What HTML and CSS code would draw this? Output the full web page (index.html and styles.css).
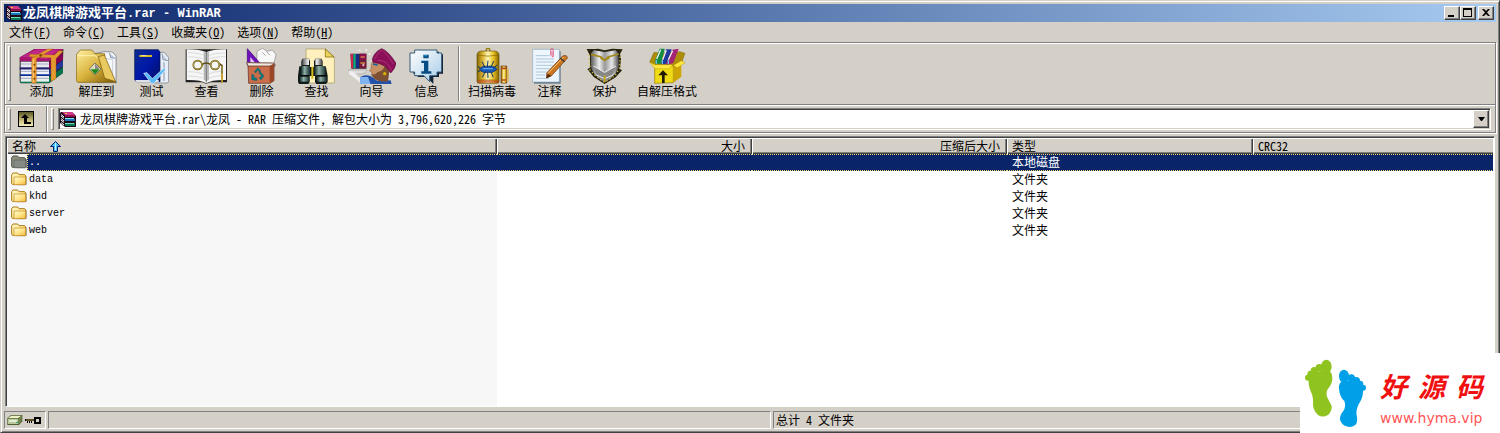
FILE: index.html
```html
<!DOCTYPE html>
<html lang="zh-CN">
<head>
<meta charset="utf-8">
<title>龙凤棋牌游戏平台.rar - WinRAR</title>
<link rel="stylesheet" href="styles.css">
</head>
<body>
<svg class="defs" aria-hidden="true">
  <defs>
    <linearGradient id="fold" x1="0" y1="0" x2="1" y2="1"><stop offset="0" stop-color="#fffbd0"/><stop offset=".5" stop-color="#ffe58a"/><stop offset="1" stop-color="#f5b93c"/></linearGradient>
    <linearGradient id="gold" x1="0" y1="0" x2="1" y2="1"><stop offset="0" stop-color="#fff0a0"/><stop offset=".5" stop-color="#d8b23c"/><stop offset="1" stop-color="#7c5804"/></linearGradient>
    <linearGradient id="tank"><stop offset="0" stop-color="#8a6a08"/><stop offset=".25" stop-color="#d8b030"/><stop offset=".5" stop-color="#fff8b8"/><stop offset=".75" stop-color="#e8c020"/><stop offset="1" stop-color="#806000"/></linearGradient>
    <linearGradient id="steel"><stop offset="0" stop-color="#555"/><stop offset=".3" stop-color="#eee"/><stop offset=".5" stop-color="#999"/><stop offset=".75" stop-color="#e8e8e8"/><stop offset="1" stop-color="#444"/></linearGradient>
    <linearGradient id="tube"><stop offset="0" stop-color="#142424"/><stop offset=".4" stop-color="#8fb0a8"/><stop offset="1" stop-color="#182c2c"/></linearGradient>
    <linearGradient id="bluebook" x1="0" y1="0" x2="1" y2="1"><stop offset="0" stop-color="#0a2c90"/><stop offset=".5" stop-color="#0018a8"/><stop offset="1" stop-color="#000f60"/></linearGradient>
    <linearGradient id="info" x1="0" y1="0" x2="1" y2="1"><stop offset="0" stop-color="#fff"/><stop offset="1" stop-color="#a8cce8"/></linearGradient>
    <linearGradient id="upbg" x1="0" y1="0" x2="0" y2="1"><stop offset="0" stop-color="#5c5828"/><stop offset=".6" stop-color="#c8bc78"/><stop offset="1" stop-color="#f4ecc0"/></linearGradient>
    <symbol id="books" viewBox="0 0 16 16">
      <path d="M1 1h11l4 4v11H5L0 12V2z" fill="#200818"/>
      <path d="M2 1h10l3 3H5z" fill="#d03888"/><path d="M5 4h10v2H5z" fill="#90104c"/>
      <path d="M5 8h10v2H5z" fill="#1878b8"/><path d="M5 7h9v1H5z" fill="#90e0f8"/>
      <path d="M5 12h10v3H5z" fill="#087858"/><path d="M5 12h9v1H5z" fill="#70e0b8"/>
      <path d="M1 3.500l3 2.500M1 5l3 2.500M1 7.500l3 2.500M1 9l3 2.500M1 11.500l3 2.500" stroke="#fff" stroke-width="1"/>
      <path d="M5 2h2v1H5z" fill="#e8c040"/>
    </symbol>
    <symbol id="folder" viewBox="0 0 48 42">
      <path d="M5 40h40l3-3V12l-3 2v24z" fill="#888" opacity=".6"/>
      <path d="M2 8l4-5h14l4 5h17l3 4v25H4l-2-3z" fill="url(#fold)" stroke="#a87818" stroke-width="3"/>
      <path d="M9 37V15h35v21l-2 2H10z" fill="url(#fold)" stroke="#c08a20" stroke-width="2"/>
    </symbol>
    <symbol id="folder-up" viewBox="0 0 48 42">
      <path d="M5 40h40l3-3V12l-3 2v24z" fill="#8a8a8a"/>
      <path d="M2 8l4-5h14l4 5h17l3 4v25H4l-2-3z" fill="#8c8f7d" stroke="#545448" stroke-width="3"/>
      <path d="M9 37V15h35v21l-2 2H10z" fill="#858a84" stroke="#5c6060" stroke-width="2"/>
    </symbol>
  </defs>
</svg>
<div class="window">
  <header class="titlebar">
    <svg class="icon16" aria-hidden="true"><use href="#books"/></svg>
    <h1 class="title">龙凤棋牌游戏平台<span class="latin">.rar - WinRAR</span></h1>
    <div class="captions">
      <button class="caption" aria-label="最小化"><svg width="12" height="10" viewBox="0 0 12 10"><path d="M2 7h6v2H2z"/></svg></button>
      <button class="caption" aria-label="最大化"><svg width="12" height="10" viewBox="0 0 12 10"><path fill-rule="evenodd" d="M1 0h9v9H1zM2 2v6h7V2z"/></svg></button>
      <button class="caption close" aria-label="关闭"><svg width="12" height="10" viewBox="0 0 12 10"><path d="M2 1h2l2 2 2-2h2L7 4.500l3 3.500H8L6 6 4 8H2l3-3.500z"/></svg></button>
    </div>
  </header>

  <nav class="menubar">
    <button>文件(<u>F</u>)</button>
    <button>命令(<u>C</u>)</button>
    <button>工具(<u>S</u>)</button>
    <button>收藏夹(<u>O</u>)</button>
    <button>选项(<u>N</u>)</button>
    <button>帮助(<u>H</u>)</button>
  </nav>

  <div class="rebar">
    <div class="band tools">
      <i class="grip"></i>
      <button class="tool"><svg width="45" height="36" viewBox="55 25 135 108">
        <path d="M57 54L101 28h87l-2 73-41 30H60l-3-5z" fill="#222"/>
        <path d="M144 70l43-31v22l-43 28z" fill="#840050"/><path d="M145 91l42-29v18l-42 28z" fill="#24389c"/><path d="M145 112l42-29v17l-42 30z" fill="#08704c"/>
        <path d="M57 53L102 28h87l-42 37H58z" fill="#a81470"/><path d="M63 51l42-21h70l-37 28z" fill="#c02888"/>
        <path d="M60 66h85v18H60z" fill="#e8e8f0"/><path d="M60 88h85v17H60z" fill="#eef2f8"/><path d="M60 109h85v18H60z" fill="#e6eeee"/>
        <path d="M61 73h83M61 95h83M61 116h83" stroke="#a8acc0" stroke-width="3"/>
        <path d="M57 85h88M57 88h88" stroke="#202080" stroke-width="3"/><path d="M57 106h88" stroke="#0838c0" stroke-width="4"/><path d="M58 128h87" stroke="#087850" stroke-width="4"/>
        <path d="M87 44l74 2 14-13 13 1-22 23v60l-15 8V54l-64-3zM93 55l48-27h15l-49 29v73H93z" fill="#e59a30" stroke="#a05808" stroke-width="1"/>
        <path d="M98 58v70" stroke="#ffd080" stroke-width="3"/><g fill="#7c4200"><circle cx="101" cy="75" r="3"/><circle cx="101" cy="96" r="3"/><circle cx="101" cy="117" r="3"/><circle cx="120" cy="47" r="4"/></g>
      </svg><span>添加</span></button>
      <button class="tool"><svg width="41" height="36" viewBox="233 25 123 108">
        <path d="M286 43l31-7 25 1 11 12v80h-55z" fill="#f5f7fa" stroke="#606878" stroke-width="2"/><path d="M333 40l4 14 14 2" fill="#b8c4d8" stroke="#7080a0" stroke-width="2"/><path d="M312 54l31 6v62" fill="none" stroke="#b8c0cc" stroke-width="2"/>
        <path d="M234 45l12-14h34l10 11h29v50l35 36H238l-4-5z" fill="url(#gold)" stroke="#755400" stroke-width="2"/>
        <path d="M237 48h54l6 8" fill="none" stroke="#fff4b0" stroke-width="3"/><path d="M300 51l18-5 34 80-33-10z" fill="#e8ca60" stroke="#735306" stroke-width="2"/>
        <path d="M290 70l18 18-18 18-17-18z" fill="#e0e0c0" stroke="#555" stroke-width="2"/><path d="M277 89h27l-14 15z" fill="#208818"/><path d="M290 72v16h14z" fill="#888"/>
      </svg><span>解压到</span></button>
      <button class="tool"><svg width="35" height="36" viewBox="403 25 105 108">
        <path d="M454 38h40l13 16v73l-5 3h-48z" fill="#e8eef8" stroke="#687080" stroke-width="2"/><path d="M487 42l3 18 15 3" fill="#c0cce0" stroke="#707890" stroke-width="2"/><path d="M493 68v56" stroke="#8894a8" stroke-width="3"/>
        <path d="M405 30h71l5 7v89h-71l-5-6z" fill="url(#bluebook)" stroke="#00104c" stroke-width="2"/><path d="M407 121h70v6h-67z" fill="#dce0ea"/>
        <path d="M419 46h38v6h-38z" fill="#d4bc20"/><path d="M425 48h15" stroke="#fff" stroke-width="2"/>
        <path d="M432 101l10-2 16 18 35-32 6 3-36 43h-8z" fill="#58b8f8" stroke="#e8f6ff" stroke-width="2"/>
      </svg><span>测试</span></button>
      <button class="tool"><svg width="43" height="36" viewBox="34 25 129 108">
        <path d="M36 29h124v99h-49l-13 4-13-4H36z" fill="#202020"/><path d="M39 29q42 0 59 10 17-10 59-10v92q-43-1-59 10-17-11-59-10z" fill="#f6f6f6"/>
        <path d="M90 34q6 1 8 5v88q-3-5-8-7zM98 39q2-4 8-5v86q-6 2-8 7z" fill="#b9b9b9"/><path d="M98 39v90" stroke="#555" stroke-width="2"/>
        <path d="M43 39q27 0 47 7M43 51q22 0 44 6M43 96q24 0 44 6M43 109q24 0 44 6M106 47q17-7 49-7M106 58q17-7 49-7M106 102q17-7 38-7M106 115q17-7 38-7" fill="none" stroke="#ccc" stroke-width="2"/>
        <g fill="none" stroke="#594a10" stroke-width="5"><circle cx="72" cy="76" r="13"/><circle cx="124" cy="76" r="13"/><path d="M85 75q13-10 26 0M137 72l8 6v25"/></g><g fill="none" stroke="#e8cf59" stroke-width="2"><circle cx="72" cy="76" r="13"/><circle cx="124" cy="76" r="13"/><path d="M145 78v27"/></g><path d="M142 104h6v25h-5z" fill="#c7a020"/>
      </svg><span>查看</span></button>
      <button class="tool"><svg width="31" height="36" viewBox="216 25 93 108">
        <path d="M249 35l16-9 15 9 15-4 11 14-8 33h-50z" fill="#f8f8f8" stroke="#888" stroke-width="2"/><path d="M265 38l10 10M277 35l11 12" stroke="#aaa" stroke-width="3"/>
        <path d="M220 27l43 49h-43z" fill="#7010b8" stroke="#380078" stroke-width="2"/><path d="M229 52l15 17h-15z" fill="#dfc8f5"/>
        <path d="M218 69l82 1 4 8-11 7h-68z" fill="#efe8df" stroke="#765047" stroke-width="3"/>
        <path d="M222 79h66l12-6v50l-12 8h-64z" fill="#c96d4b" stroke="#59281a" stroke-width="2"/><path d="M287 80l12-6v48l-12 8z" fill="#994526"/>
        <path d="M241 97l10-13 10 10-6 2-4-5-5 8zM259 96l11 13-9 12-6-7 5-1 2-6-8-7zM248 123l-15-3 1-17 7 5-1 6 8 1z" fill="#087c82" stroke="#064c53" stroke-width="1"/>
      </svg><span>删除</span></button>
      <button class="tool"><svg width="37" height="36" viewBox="358 25 111 108">
        <path d="M382 28h59l26 24v78h-84z" fill="#fff0bd" stroke="#a4975e" stroke-width="2"/><path d="M440 28v24h26z" fill="#ead25b" stroke="#755d00" stroke-width="2"/>
        <path d="M368 65l3-8h20l3 8v17h12v-17l4-8h19l3 8v18h10l5 25v19l-5 6h-29l-4-6v-18h-16v18l-4 6h-28l-3-6v-19l4-28h6z" fill="#101a18"/>
        <path d="M371 58h20v18h-20zM410 58h20v18h-20z" fill="url(#steel)"/><path d="M367 79h27v28h-27z" fill="url(#tube)"/><path d="M407 79h34v28h-34z" fill="url(#tube)"/><path d="M363 111h29v15h-29z" fill="url(#tube)"/><path d="M414 111h30v15h-30z" fill="url(#tube)"/><path d="M365 108h26M416 108h27" stroke="#000" stroke-width="3"/><path d="M401 81v36" stroke="#d5bb17" stroke-width="6"/>
      </svg><span>查找</span></button>
      <button class="tool"><svg width="48" height="36" viewBox="38 25 144 108">
        <path d="M45 42h48v45H48z" fill="#303030"/><path d="M46 43h7v43h-5z" fill="#d02450"/><path d="M54 43h7v43h-7z" fill="#10a880"/><path d="M62 43h9v43h-9z" fill="#1a2a8c"/><path d="M73 42h20v20H73z" fill="#8a104c"/><path d="M73 64h20v22H73z" fill="#771838"/><path d="M76 52h12M75 70h14" stroke="#f0bc40" stroke-width="3"/>
        <path d="M39 91h56l-4 8-14 4H52z" fill="#ddd" stroke="#777" stroke-width="1"/><path d="M42 93q12 2 21 10l5 9 10 4-2 14-18-15-17-12z" fill="#f0f0f0"/>
        <path d="M75 112q14-10 32-2l20 14 39-2 3 12H75z" fill="#2451a8"/><path d="M75 112l-1 21 32 1-8-22z" fill="#80b4f0"/>
        <path d="M115 58q-10 18-8 30l-5 5 7 6q2 15 15 16 16 8 34 0l-2-39z" fill="#c49064" stroke="#684020" stroke-width="1"/><path d="M106 103q15 5 20-5 23-4 24-30l14 11-6 46q-24 5-41-8z" fill="#7b5035"/>
        <path d="M111 60q4-22 28-33 20 7 43 44-3 17-16 29-14-28-52-32z" fill="#8c1058" stroke="#58003a" stroke-width="2"/><path d="M118 58q13-25 24-27 14 13 33 43M126 62q31-2 42 30" fill="none" stroke="#b84080" stroke-width="2"/>
        <path d="M113 73l14 3" stroke="#1060a8" stroke-width="4"/><circle cx="148" cy="102" r="5" fill="#d8b000"/><path d="M93 28v6M90 31h6M73 30v4M71 32h4M102 40v6M99 43h6M65 31v2M107 61v4M84 72v8M80 76h8M109 32v3" stroke="#fff" stroke-width="2"/>
      </svg><span>向导</span></button>
      <button class="tool"><svg width="36" height="36" viewBox="223 25 108 108">
        <path d="M249 36h64v8h12v58h-12v10h-17v21l-20-21h-27v-10h-13V44h13z" fill="#123"/>
        <path d="M240 31h67v9h14v57h-14v11h-22v18l-17-18h-28V97h-14V40h14z" fill="url(#info)" stroke="#355a78" stroke-width="3"/>
        <path d="M266 45h16v11h-16zM260 63h21v32h9v7h-30v-7h8V70h-8z" fill="#074c84"/><path d="M269 46h8v4h-8z" fill="#2990c0"/>
      </svg><span>信息</span></button>
      <i class="separator"></i>
      <button class="tool wide"><svg width="33" height="36" viewBox="424 25 99 108">
        <path d="M454 33q0-7 6-7t6 7" fill="none" stroke="#9a7b08" stroke-width="4"/><path d="M427 47q0-13 16-13h34q16 0 16 13v79q0 5-7 5h-51q-8 0-8-5z" fill="url(#tank)" stroke="#624c00" stroke-width="2"/>
        <path d="M429 46q31 7 62 0M428 121h64" fill="none" stroke="#836800" stroke-width="2"/><path d="M428 122h64v7h-64z" fill="#c43824" opacity=".6"/>
        <path d="M434 89q8-12 23-9 20-4 30 9-11 13-28 9-17 3-25-9z" fill="#1a5cb8" stroke="#08245c" stroke-width="2"/><path d="M442 66l9 18M460 63l-2 19M477 64l-8 19M488 76l-12 9M443 113l9-18M460 115l-1-19M476 113l-7-17M429 80l9 6M429 97l9-5" stroke="#0a3470" stroke-width="3"/><path d="M445 87h29" stroke="#70b8f0" stroke-width="3"/>
        <path d="M499 79h17v51h-17z" fill="url(#tank)" stroke="#5e2708" stroke-width="2"/><path d="M500 86h15M500 121h15" stroke="#b74716" stroke-width="5"/><path d="M516 87h6v39h-6z" fill="#ddb64e"/>
      </svg><span>扫描病毒</span></button>
      <button class="tool"><svg width="36" height="36" viewBox="43 25 108 108">
        <path d="M49 35h80v97H49z" fill="#677887"/><path d="M45 29h80v98H45z" fill="#edf6ff" stroke="#8ca8bb" stroke-width="2"/><path d="M54 48h42M54 58h55M54 67h55M54 77h51M54 87h42M54 97h32M54 106h29M54 116h40" stroke="#8caebe" stroke-width="2"/>
        <path d="M99 47V32q0-5 4-5t4 5v17q0 3-2 3t-2-3V34" fill="none" stroke="#e02050" stroke-width="2"/><path d="M87 100l48-51q11-5 15 5l-49 55-14 6z" fill="#cc7620" stroke="#633008" stroke-width="2"/><path d="M91 101l47-49" stroke="#ffc37a" stroke-width="3"/><path d="M128 56l13 10" stroke="#333" stroke-width="4"/><path d="M85 115l6-13 9 7z" fill="#502800"/>
      </svg><span>注释</span></button>
      <button class="tool"><svg width="37" height="36" viewBox="194 25 111 108">
        <path d="M196 28h26l8-1 20 5 23-5 31 2-8 14 3 14-3 31 6 4-19 21-33 20-33-21-19-24 8-4V48z" fill="#26220e"/><path d="M209 41l8-9 33 5 33-5 8 9 2 40-11 22-32 23-31-22-11-23z" fill="url(#steel)"/>
        <path d="M209 44l31 8 10 10 10-10 32-9M250 62l-13-8M250 62l14-8" fill="none" stroke="#a38918" stroke-width="5"/><path d="M216 79l33 20 35-20-13 36-21 13-22-14z" fill="#888"/><path d="M216 79l34 19 34-19M225 106l25 11 25-11" fill="none" stroke="#eee" stroke-width="3"/>
        <path d="M203 45l3 46 17 18 27 19 31-20 14-23 2-42" fill="none" stroke="#cbbb43" stroke-width="4" stroke-dasharray="4 7"/><path d="M250 107v20" stroke="#c6a610" stroke-width="5"/>
      </svg><span>保护</span></button>
      <button class="tool xwide"><svg width="37" height="36" viewBox="386 25 111 108">
        <path d="M388 67l13-29 18 2 60-4 15 5-9 26-24 11-62-1z" fill="#ad8c08" stroke="#675000" stroke-width="1"/>
        <path d="M405 60l13-33h15l-11 45h-17z" fill="#128b43"/><path d="M422 72l15-43h17l-15 45h-17z" fill="#203a9c"/><path d="M437 72l19-42 19-3-16 43-20 6z" fill="#a32476"/><path d="M409 58l12-28M427 60l11-28M444 60l13-27" stroke="#f0f0f0" stroke-width="4"/><path d="M408 61v12M426 61v12M444 61v12" stroke="#67b8e5" stroke-width="4"/>
        <path d="M403 76l56 3v50l-56 2z" fill="#efdb13" stroke="#987b00" stroke-width="2"/><path d="M459 79l24-13v45l-24 18z" fill="#cda708"/><path d="M388 67l16 8h55l-13 12h-42zM459 77l24-14 12 6-24 15z" fill="#ffe83e" stroke="#9c7c00" stroke-width="1"/>
        <path d="M428 92l15 15h-10v23h-8v-23h-11z" fill="#201c00"/>
      </svg><span>自解压格式</span></button>
    </div>
    <div class="band address">
      <i class="grip"></i>
      <button class="up" aria-label="上级目录"><svg width="16" height="16" viewBox="0 0 16 16"><path d="M0 0h16v16H0z"/><path d="M1 1h14v14H1z" fill="url(#upbg)"/><path d="M7 3l4 4H9v4h4v2H6V7H3z"/></svg></button>
      <i class="separator"></i>
      <i class="grip"></i>
      <div class="combo">
        <svg class="icon16" aria-hidden="true"><use href="#books"/></svg>
        <select aria-label="路径"><option>龙凤棋牌游戏平台.rar\龙凤 - RAR 压缩文件, 解包大小为 3,796,620,226 字节</option></select>
        <span class="drop"><svg width="7" height="4" viewBox="0 0 7 4"><path d="M0 0h7L4 4H3z"/></svg></span>
      </div>
    </div>
  </div>

  <main class="list">
    <table>
      <colgroup><col class="c-name"><col class="c-size"><col class="c-size"><col class="c-type"><col></colgroup>
      <thead><tr>
        <th><button>名称<svg class="sort" width="11" height="11" viewBox="0 0 11 11"><path d="M5.500 .5l5 5h-3v5h-4v-5h-3z" fill="#48c0f8" stroke="#002070"/><path d="M5.500 2v7" stroke="#c0f4ff"/></svg></button></th>
        <th class="num"><button>大小</button></th>
        <th class="num"><button>压缩后大小</button></th>
        <th><button>类型</button></th>
        <th class="last"><button>CRC32</button></th>
      </tr></thead>
      <tbody>
        <tr class="selected"><td><div class="name"><svg class="folder"><use href="#folder-up"/></svg><span class="latin">..</span></div></td><td></td><td></td><td>本地磁盘</td><td></td></tr>
        <tr><td><div class="name"><svg class="folder"><use href="#folder"/></svg><span class="latin">data</span></div></td><td></td><td></td><td>文件夹</td><td></td></tr>
        <tr><td><div class="name"><svg class="folder"><use href="#folder"/></svg><span class="latin">khd</span></div></td><td></td><td></td><td>文件夹</td><td></td></tr>
        <tr><td><div class="name"><svg class="folder"><use href="#folder"/></svg><span class="latin">server</span></div></td><td></td><td></td><td>文件夹</td><td></td></tr>
        <tr><td><div class="name"><svg class="folder"><use href="#folder"/></svg><span class="latin">web</span></div></td><td></td><td></td><td>文件夹</td><td></td></tr>
      </tbody>
    </table>
  </main>

  <footer class="status">
    <div class="pane icons">
      <svg width="16" height="12" viewBox="0 0 48 36"><path d="M1 12L12 3h34v19L36 33H1z" fill="#4d6030"/><path d="M3 12l10-7h30l-9 7z" fill="#eef0c8"/><path d="M3 14h31v16H3z" fill="#b8c898"/><path d="M7 19h22v4H7z" fill="#fff"/><path d="M36 13l8-7v15l-8 8z" fill="#76844b"/><path d="M28 24h5v3h-5z" fill="#08a080"/></svg>
      <svg width="17" height="9" viewBox="0 0 17 9"><path fill-rule="evenodd" d="M0 3h9V1h7v7H9V5H7v2H6V5H5v2H4V5H3v2H2V5H0zM11 3v3h3V3z"/><path d="M1 4h8" stroke="#b8a040"/></svg>
    </div>
    <div class="pane"></div>
    <div class="pane total">总计 4 文件夹</div>
  </footer>

  <aside class="watermark">
    <svg width="62" height="70" viewBox="0 0 186 210">
      <g fill="#8fc31f"><path d="M14 62q10-24 48-24 20-2 22 14 4 18-7 34-13 12-8 30 6 12 14 28 2 14-10 26-16 10-30 2-14-12-16-30 2-24-6-40-8-16-7-40z"/><ellipse cx="67" cy="26" rx="16" ry="21"/><circle cx="46" cy="29" r="11"/><circle cx="31" cy="38" r="11"/><circle cx="20" cy="48" r="10"/><circle cx="12" cy="59" r="9"/></g>
      <g fill="#00a0e9"><path d="M105 92q-2-22 16-24 40-4 56 22 2 24-9 42-10 14-11 34 6 24-2 34-14 10-28 5-14-5-19-20-1-14 10-26 9-14 3-30-14-12-16-37z"/><ellipse cx="120" cy="55" rx="15" ry="20"/><circle cx="142" cy="60" r="11"/><circle cx="157" cy="68" r="11"/><circle cx="168" cy="78" r="10"/><circle cx="177" cy="89" r="9"/></g>
    </svg>
    <div class="brand"><strong><span>好</span><span>源</span><span>码</span></strong><a href="#">www.hyma.vip</a></div>
  </aside>
</div>
</body>
</html>
```
FILE: styles.css
```css
* { box-sizing: border-box; }
body {
  margin: 0;
  font: 12px/16px "Noto Sans CJK SC", sans-serif;
  font-feature-settings: "hwid";
  color: #000;
}
button, select { font: inherit; font-feature-settings: "hwid"; color: inherit; border: 0; padding: 0; margin: 0; background: none; }
svg { display: block; flex: none; }
.defs { position: absolute; width: 0; height: 0; }
.latin { font-family: "Liberation Mono", monospace; font-size: 10px; white-space: pre; }
.icon16 { width: 16px; height: 16px; }

.window {
  position: relative;
  display: flex;
  flex-direction: column;
  min-height: 100vh;
  padding: 3px;
  background: #d4d0c8;
  border: 1px solid;
  border-color: #d4d0c8 #404040 #404040 #d4d0c8;
  box-shadow: inset 1px 1px #fff, inset -1px -1px #808080;
}

.titlebar {
  display: flex;
  align-items: center;
  height: 18px;
  padding: 0 2px;
  background: linear-gradient(90deg, #0a246a, #a6caf0);
}
.title { flex: 1; margin: 0 0 0 1px; font-size: 13px; line-height: 18px; font-weight: 700; color: #fff; }
.title .latin { font-size: 12px; }
.captions { display: flex; }
.caption {
  width: 16px;
  height: 14px;
  padding: 1px;
  background: #d4d0c8;
  border: 1px solid;
  border-color: #fff #404040 #404040 #fff;
  box-shadow: inset -1px -1px #808080;
}
.caption.close { margin-left: 2px; }

.menubar { display: flex; gap: 12px; height: 20px; padding: 0 5px; line-height: 18px; }

.rebar {
  border: 1px solid #808080;
  box-shadow: 1px 1px #fff, inset 1px 1px #fff;
}
.band { display: flex; align-items: stretch; }
.tools { height: 61px; padding: 3px; }
.address { height: 28px; padding: 3px 4px 1px 3px; border-top: 1px solid #808080; box-shadow: inset 0 1px #fff; }
.grip { flex: none; width: 3px; border: 1px solid; border-color: #fff #808080 #808080 #fff; }
.address .grip { margin-bottom: 1px; }
.separator { flex: none; width: 2px; border-left: 1px solid #808080; border-right: 1px solid #fff; }
.tools .grip { margin-right: 3px; }
.tools .separator { margin: 0 2px 0 4px; }
.tool { flex: none; display: flex; flex-direction: column; align-items: center; width: 55px; padding-top: 2px; line-height: 14px; white-space: nowrap; }
.wide { width: 60px; }
.xwide { width: 70px; }

.up { width: 30px; display: flex; align-items: center; justify-content: center; }
.up svg { margin-bottom: 2px; }
.address .separator { margin: -2px 3px -1px 5px; }
.combo {
  flex: 1;
  display: flex;
  align-items: center;
  margin-left: 4px;
  height: 22px;
  padding-left: 1px;
  background: #fff;
  border: 1px solid;
  border-color: #808080 #fff #fff #808080;
  box-shadow: inset 1px 1px #404040, inset -1px -1px #d4d0c8;
}
.combo select {
  flex: 1;
  min-width: 0;
  height: 18px;
  margin-left: 4px;
  appearance: none;
  outline: 0;
}
.drop {
  display: flex;
  align-items: center;
  justify-content: center;
  width: 16px;
  height: 18px;
  margin-right: 1px;
  background: #d4d0c8;
  border: 1px solid;
  border-color: #fff #404040 #404040 #fff;
  box-shadow: inset -1px -1px #808080;
  pointer-events: none;
}

.list {
  flex: 1;
  margin: 3px 1px 0;
  border: 1px solid;
  border-color: #808080 #fff #fff #808080;
  box-shadow: inset 1px 1px #404040;
  padding: 1px 1px 0 1px;
  background: linear-gradient(90deg, #f7f7f7 491px, #fff 491px);
}
table { width: 100%; border-collapse: collapse; table-layout: fixed; }
.c-name { width: 490px; }
.c-size { width: 255px; }
.c-type { width: 246px; }
th, td { padding: 0; font-weight: 400; text-align: left; }
th {
  height: 16px;
  background: #d4d0c8;
  box-shadow: inset 1px 1px #fff, inset -1px -1px #404040, inset -2px -2px #808080;
}
th button { display: flex; align-items: center; width: 100%; height: 16px; padding: 0 7px 0 5px; }
.num button { justify-content: flex-end; }
.last { box-shadow: inset 1px 1px #fff, inset 0 -1px #404040, inset 0 -2px #808080; }
.sort { margin-left: 14px; }
td { height: 17px; line-height: 15px; padding: 0 0 2px 5px; }
td:first-child { padding: 0 0 0 4px; }
.name { display: flex; height: 17px; }
.name .latin { flex: 1; padding-left: 2px; line-height: 17px; }
.folder { width: 16px; height: 14px; margin-top: 1px; }
.selected td:not(:first-child), .selected .latin {
  color: #fff;
  background:
    repeating-linear-gradient(90deg, #f5db65 0 1px, #0a246a 1px 2px) top / 100% 1px no-repeat,
    repeating-linear-gradient(90deg, #f5db65 0 1px, #0a246a 1px 2px) bottom / 100% 1px no-repeat,
    #0a246a;
}
.selected .latin { border-left: 1px dotted #f5db65; padding-left: 1px; }

.status { display: flex; gap: 2px; height: 18px; margin-top: 4px; }
.pane { flex: 1; border: 1px solid; border-color: #808080 #fff #fff #808080; line-height: 16px; padding-left: 2px; }
.icons { flex: none; display: flex; align-items: center; gap: 2px; width: 42px; }
.total { white-space: nowrap; }

.watermark {
  position: absolute;
  right: -1px;
  bottom: -1px;
  display: flex;
  width: 200px;
  height: 80px;
  padding: 5px 4px;
  background: #fff;
}
.brand { flex: 1; padding: 10px 0 0 14px; color: #f01010; }
.brand strong { display: flex; gap: 11px; font-size: 27px; line-height: 36px; font-weight: 700; font-style: italic; }
.brand a { display: block; color: #f55; font: 14px/28px "DejaVu Sans", sans-serif; text-decoration: none; }
```
